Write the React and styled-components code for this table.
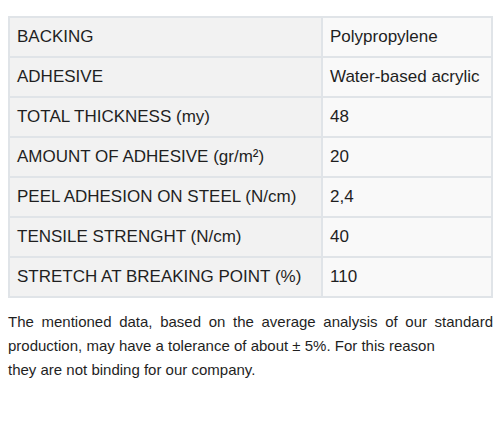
import styled, { createGlobalStyle } from "styled-components";

const GlobalStyle = createGlobalStyle`
    body {
        margin: 0;
        background: #fff;
        font-family: "Liberation Sans", Arial, sans-serif;
        color: #222;
    }
`

const Wrap = styled.div`
    padding: 16px 8px 0 8px;
    width: 485px;
`

const Table = styled.table`
    width: 100%;
    border-collapse: collapse;
    border: 1px solid #e2e5e8;
    font-size: 17px;
`

const Cell = styled.td`
    height: 38px;
    padding: 0 7px;
    border: 2px solid #e0e4e8;
    background: ${(props) => (props.label ? "#f2f2f2" : "#f9f9f9")};
    width: ${(props) => (props.label ? "297px" : "auto")};
    color: #1f1f1f;
    white-space: nowrap;
`

const Note = styled.p`
    margin: 12px 0 0 0;
    font-size: 15px;
    line-height: 24px;
    text-align: justify;
    color: #1f1f1f;
`

const rows = [
    ["BACKING", "Polypropylene"],
    ["ADHESIVE", "Water-based acrylic"],
    ["TOTAL THICKNESS (my)", "48"],
    ["AMOUNT OF ADHESIVE (gr/m²)", "20"],
    ["PEEL ADHESION ON STEEL (N/cm)", "2,4"],
    ["TENSILE STRENGHT (N/cm)", "40"],
    ["STRETCH AT BREAKING POINT (%)", "110"],
]

const App = () => {
    return (
        <>
            <GlobalStyle />
            <Wrap>
                <Table>
                    <tbody>
                        {rows.map(([k, v]) => (
                            <tr key={k}>
                                <Cell label>{k}</Cell>
                                <Cell>{v}</Cell>
                            </tr>
                        ))}
                    </tbody>
                </Table>
                <Note>
                    The mentioned data, based on the average analysis of our standard production, may have a tolerance of about ± 5%. For this reason
                    <br />
                    they are not binding for our company.
                </Note>
            </Wrap>
        </>
    )
}

export default App;
